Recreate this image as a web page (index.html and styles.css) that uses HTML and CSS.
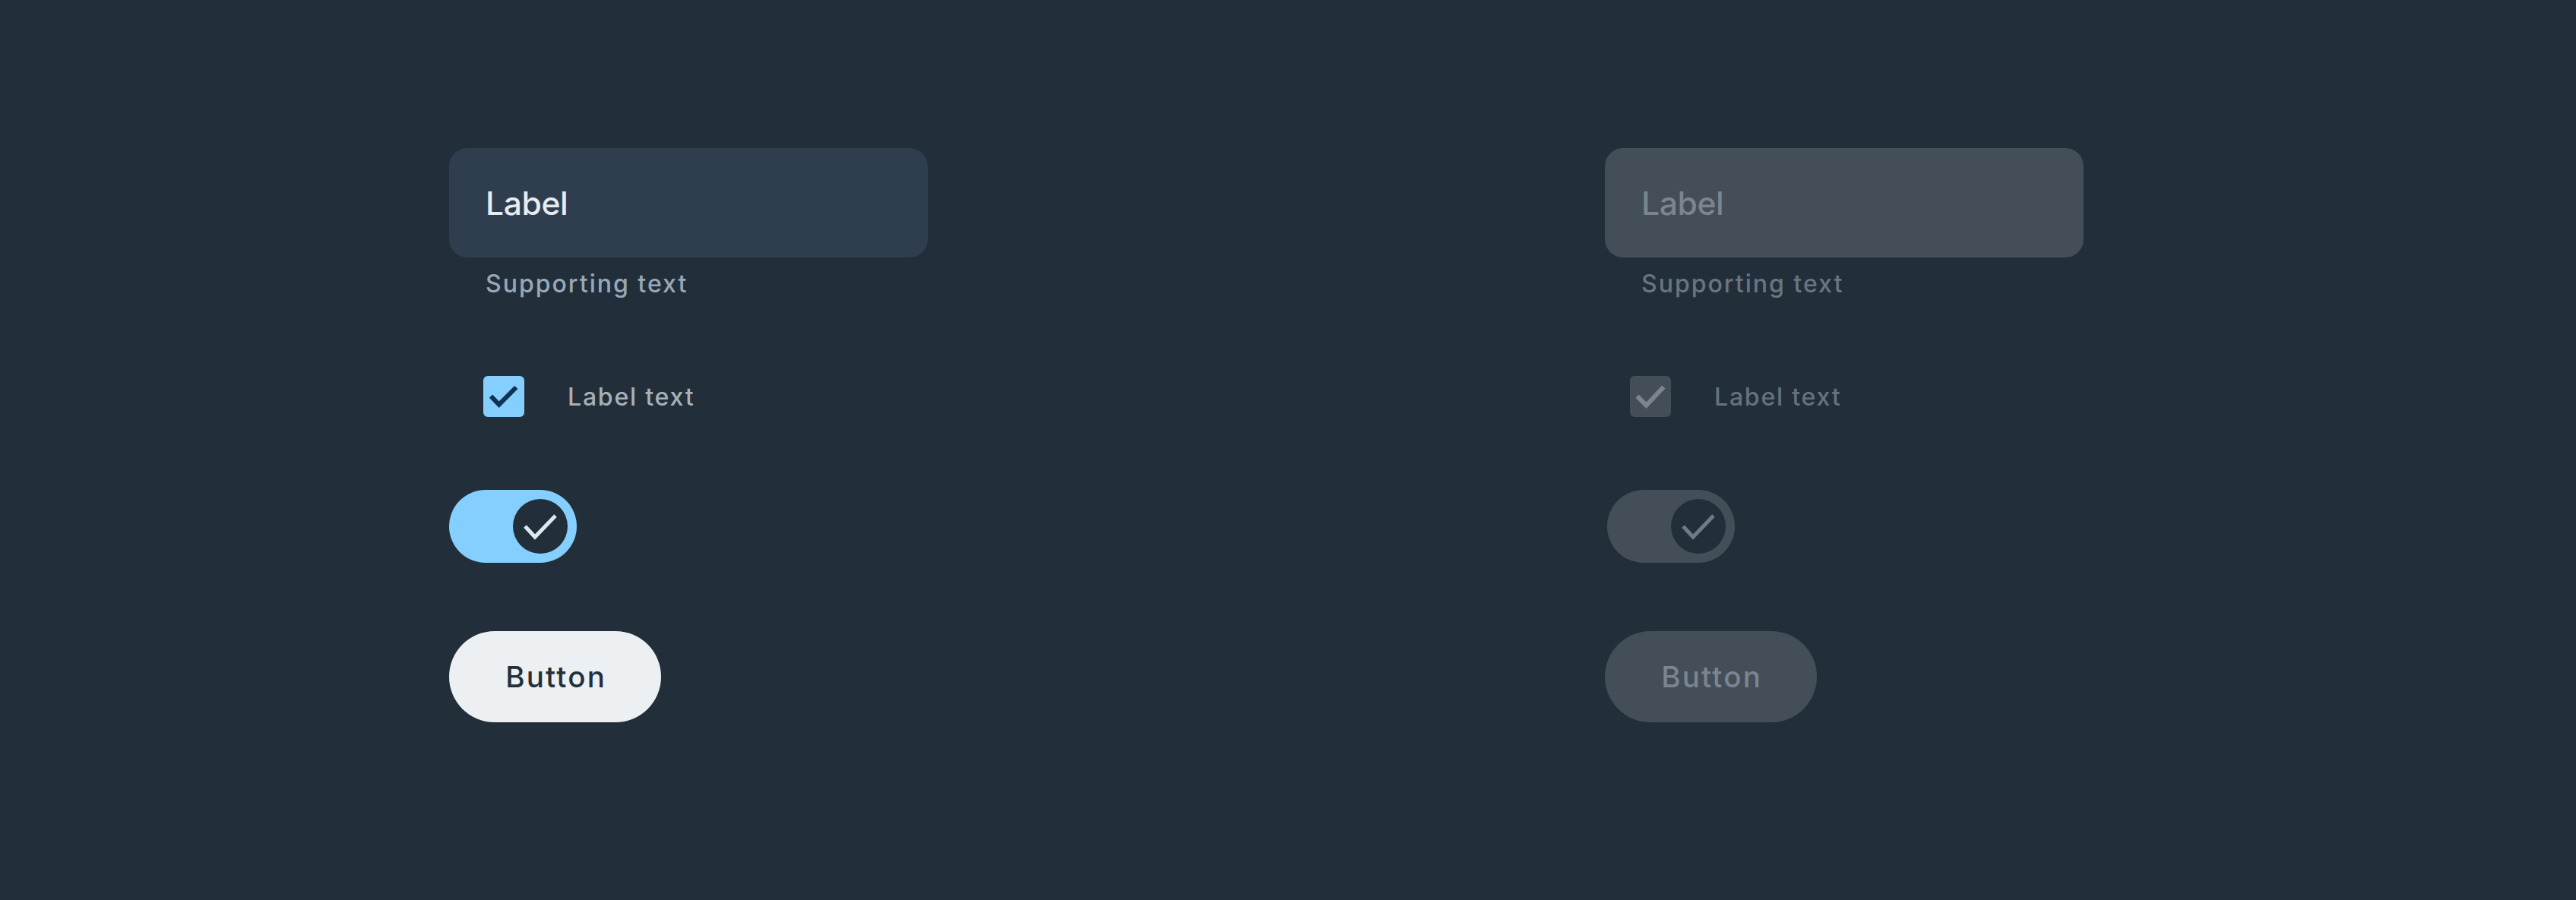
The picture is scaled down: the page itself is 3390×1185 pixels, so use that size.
FILE: index.html
```html
<!DOCTYPE html>
<html>
<head>
<meta charset="utf-8">
<link rel="stylesheet" href="styles.css">
</head>
<body>
<main class="board">
  <section class="col">
    <div class="field"><span class="field-label">Label</span></div>
    <p class="support">Supporting text</p>
    <label class="check-row">
      <span class="checkbox">
        <svg viewBox="0 0 54 54" width="54" height="54"><polyline points="10,26.7 20.7,37.7 43.3,15" /></svg>
      </span>
      <span class="check-label">Label text</span>
    </label>
    <div class="toggle">
      <span class="knob">
        <svg viewBox="0 0 72 72" width="72" height="72"><polyline points="16,36 29,50 56,22" /></svg>
      </span>
    </div>
    <button class="btn">Button</button>
  </section>
  <section class="col disabled">
    <div class="field"><span class="field-label">Label</span></div>
    <p class="support">Supporting text</p>
    <label class="check-row">
      <span class="checkbox">
        <svg viewBox="0 0 54 54" width="54" height="54"><polyline points="9.5,26.7 21.5,38.7 44.3,14.5" /></svg>
      </span>
      <span class="check-label">Label text</span>
    </label>
    <div class="toggle">
      <span class="knob">
        <svg viewBox="0 0 72 72" width="72" height="72"><polyline points="16,36 29,50 56,22" /></svg>
      </span>
    </div>
    <button class="btn" disabled>Button</button>
  </section>
</main>
</body>
</html>
```
FILE: styles.css
```css
html, body {
  margin: 0;
  padding: 0;
  background: #222f3b;
}

body {
  font-family: "Inter", "Noto Sans", sans-serif;
  width: 3390px;
  height: 1185px;
  overflow: hidden;
}

.board {
  display: grid;
  grid-template-columns: 630px 630px;
  column-gap: 891px;
  padding: 195px 0 0 591px;
}

.col {
  display: flex;
  flex-direction: column;
  align-items: flex-start;
}

/* Text field */
.field {
  box-sizing: border-box;
  width: 630px;
  height: 144px;
  border-radius: 24px;
  background: #2e3e4f;
  display: flex;
  align-items: center;
  padding-left: 48px;
}

.field-label {
  font-size: 42.6px;
  font-weight: 500;
  letter-spacing: -0.4px;
  color: #e6ebef;
}

.support {
  margin: 15px 0 0 48px;
  font-size: 32px;
  line-height: 40px;
  font-weight: 500;
  letter-spacing: 2px;
  color: #98a8b8;
}

/* Checkbox */
.check-row {
  display: flex;
  align-items: center;
  margin: 101px 0 0 45px;
  height: 54px;
}

.checkbox {
  width: 54px;
  height: 54px;
  border-radius: 6px;
  background: #85cfff;
  display: block;
}

.checkbox svg {
  display: block;
  fill: none;
  stroke: #0f3350;
  stroke-width: 6;
}

.check-label {
  margin-left: 57px;
  font-size: 32px;
  font-weight: 500;
  letter-spacing: 1.8px;
  color: #aab0b8;
}

/* Toggle */
.toggle {
  box-sizing: border-box;
  margin-top: 96px;
  width: 168px;
  height: 96px;
  border-radius: 48px;
  background: #85cfff;
  display: flex;
  align-items: center;
  justify-content: flex-end;
  padding-right: 12px;
}

.knob {
  width: 72px;
  height: 72px;
  border-radius: 50%;
  background: #222f3b;
  display: block;
}

.knob svg {
  display: block;
  fill: none;
  stroke: #dde8f1;
  stroke-width: 5;
}

/* Button */
.btn {
  margin-top: 90px;
  width: 279px;
  height: 120px;
  border: none;
  border-radius: 60px;
  background: #edf0f3;
  color: #22303c;
  font-family: "Inter", "Noto Sans", sans-serif;
  font-size: 38.5px;
  font-weight: 500;
  letter-spacing: 2.2px;
  text-indent: 2.2px;
  padding: 0;
}

/* Disabled column */
.disabled .field { background: #434e59; }
.disabled .field-label { color: #7b858f; }
.disabled .support { color: #6a7580; }
.disabled .check-row { margin-left: 33px; }
.disabled .checkbox { background: #434e59; }
.disabled .checkbox svg { stroke: #7a858f; }
.disabled .check-label { color: #66727e; }
.disabled .toggle { background: #434e59; margin-left: 3px; }
.disabled .knob svg { stroke: #6f7a85; }
.disabled .btn { background: #434e59; color: #7b858f; }
```
